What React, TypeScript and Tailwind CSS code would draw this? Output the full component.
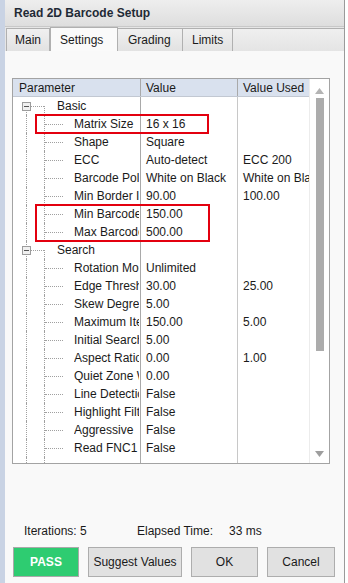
import React from "react";

type Row = { cat?: boolean; name: string; value?: string; used?: string };

const rows: Row[] = [
  { cat: true, name: "Basic" },
  { name: "Matrix Size", value: "16 x 16" },
  { name: "Shape", value: "Square" },
  { name: "ECC", value: "Auto-detect", used: "ECC 200" },
  { name: "Barcode Polarity", value: "White on Black", used: "White on Black" },
  { name: "Min Border Integrity", value: "90.00", used: "100.00" },
  { name: "Min Barcode Size", value: "150.00" },
  { name: "Max Barcode Size", value: "500.00" },
  { cat: true, name: "Search" },
  { name: "Rotation Mode", value: "Unlimited" },
  { name: "Edge Threshold", value: "30.00", used: "25.00" },
  { name: "Skew Degree", value: "5.00" },
  { name: "Maximum Iterations", value: "150.00", used: "5.00" },
  { name: "Initial Search", value: "5.00" },
  { name: "Aspect Ratio", value: "0.00", used: "1.00" },
  { name: "Quiet Zone Width", value: "0.00" },
  { name: "Line Detection", value: "False" },
  { name: "Highlight Filter", value: "False" },
  { name: "Aggressive", value: "False" },
  { name: "Read FNC1", value: "False" },
];

function TreeCell({ row, first }: { row: Row; first: boolean }) {
  return (
    <div className="relative w-[128px] h-[18px] border-r border-[#a9a9a9] overflow-hidden">
      {row.cat ? (
        <>
          <div
            className={
              first
                ? "absolute left-[13px] top-[13px] bottom-0 border-l border-dotted border-[#a0a0a0]"
                : "absolute left-[13px] top-0 bottom-0 border-l border-dotted border-[#a0a0a0]"
            }
          />
          <div className="absolute left-[18px] top-[9px] w-[13px] border-t border-dotted border-[#a0a0a0]" />
          <div className="absolute left-[31px] top-[9px] bottom-0 border-l border-dotted border-[#a0a0a0]" />
          <div className="absolute left-[9px] top-[5px] w-[9px] h-[9px] border border-[#9c9c9c] bg-[#f0f0f0] flex items-center justify-center">
            <div className="w-[5px] h-px bg-[#555]" />
          </div>
          <div className="absolute left-[44px] right-[1px] top-0 h-[18px] leading-[18px] whitespace-nowrap overflow-hidden">
            {row.name}
          </div>
        </>
      ) : (
        <>
          <div className="absolute left-[13px] top-0 bottom-0 border-l border-dotted border-[#a0a0a0]" />
          <div className="absolute left-[31px] top-0 bottom-0 border-l border-dotted border-[#a0a0a0]" />
          <div className="absolute left-[32px] top-[9px] w-[18px] border-t border-dotted border-[#a0a0a0]" />
          <div className="absolute left-[61px] right-[1px] top-0 h-[18px] leading-[18px] whitespace-nowrap overflow-hidden">
            {row.name}
          </div>
        </>
      )}
    </div>
  );
}

export default function App() {
  return (
    <div
      className="w-[348px] h-[583px] flex bg-white text-[12px] text-[#1a1a1a] overflow-hidden"
      style={{ fontFamily: '"Liberation Sans", Arial, sans-serif' }}
    >
      <div className="w-[5px] bg-[#c9d3e4]" />
      <div className="w-[340px] flex flex-col border-r border-[#9a9a9a]">
        <div className="h-[27px] flex items-center pl-[9px] bg-gradient-to-b from-[#eeeeee] to-[#dedede] border-b border-[#c8c8c8]">
          <span className="font-bold text-[#1f2a36]">Read 2D Barcode Setup</span>
        </div>
        <div className="h-[24px] flex items-end bg-[#e6e6e6]">
          <div className="w-[1px] h-full" />
          <div className="w-[44px] h-[23px] flex items-center pl-[8px] bg-gradient-to-b from-[#f0f0f0] to-[#e2e2e2] border border-[#b0b0b0] border-b-0">
            Main
          </div>
          <div className="w-[68px] h-[24px] flex items-start pt-[3px] pl-[9px] bg-[#fafafa] border border-[#b0b0b0] border-b-0">
            Settings
          </div>
          <div className="w-[65px] h-[23px] flex items-center pl-[10px] bg-gradient-to-b from-[#f0f0f0] to-[#e2e2e2] border border-[#b0b0b0] border-b-0 border-l-0">
            Grading
          </div>
          <div className="w-[50px] h-[23px] flex items-center pl-[9px] bg-gradient-to-b from-[#f0f0f0] to-[#e2e2e2] border border-[#b0b0b0] border-b-0 border-l-0">
            Limits
          </div>
          <div className="flex-1 h-[23px] bg-gradient-to-b from-[#efefef] to-[#e4e4e4] border-t border-l-0 border-[#b0b0b0]" />
        </div>
        <div className="flex-1 flex flex-col bg-[#f9f9f9] pl-[7px] pt-[27px] pb-[6px]">
          <div className="w-[318px] h-[386px] border border-[#a3a3a3] bg-white flex">
            <div className="w-[296px] flex flex-col">
              <div className="h-[18px] flex bg-[#d9e1ee] border-b border-[#c2c8d2]">
                <div className="w-[128px] border-r border-[#a9a9a9] pl-[6px] leading-[18px]">Parameter</div>
                <div className="w-[97px] border-r border-[#a9a9a9] pl-[5px] leading-[18px]">Value</div>
                <div className="flex-1 pl-[5px] leading-[18px] whitespace-nowrap overflow-hidden">Value Used</div>
              </div>
              <div className="relative flex-1 flex flex-col">
                {rows.map((r, i) => (
                  <div key={i} className="flex h-[18px]">
                    <TreeCell row={r} first={i === 0} />
                    <div className="w-[97px] border-r border-[#c8c8c8] pl-[5px] leading-[18px] whitespace-nowrap overflow-hidden">
                      {r.value ?? ""}
                    </div>
                    <div className="flex-1 pl-[5px] leading-[18px] whitespace-nowrap overflow-hidden">{r.used ?? ""}</div>
                  </div>
                ))}
                <div className="flex flex-1">
                  <div className="relative w-[128px] border-r border-[#a9a9a9]">
                    <div className="absolute left-[13px] top-0 bottom-0 border-l border-dotted border-[#a0a0a0]" />
                    <div className="absolute left-[31px] top-0 bottom-0 border-l border-dotted border-[#a0a0a0]" />
                  </div>
                  <div className="w-[97px] border-r border-[#c8c8c8]" />
                </div>
                <div className="absolute left-[22px] top-[17px] w-[174px] h-[20px] border-2 border-[#e3000f]" />
                <div className="absolute left-[22px] top-[107px] w-[175px] h-[38px] border-2 border-[#e3000f]" />
              </div>
            </div>
            <div className="flex-1 flex flex-col items-center border-l border-[#ececec] pt-[9px] pb-[6px]">
              <svg width="9" height="6" viewBox="0 0 9 6">
                <path d="M0 6 L4.5 0 L9 6 Z" fill="#b4b4b4" />
              </svg>
              <div className="mt-[4px] w-[8px] h-[253px] bg-[#acacac]" />
              <div className="flex-1" />
              <svg width="9" height="6" viewBox="0 0 9 6">
                <path d="M0 0 L9 0 L4.5 6 Z" fill="#9e9e9e" />
              </svg>
            </div>
          </div>
          <div className="flex-1" />
          <div className="h-[16px] flex items-center text-[12px]">
            <span className="ml-[12px] w-[113px]">Iterations: 5</span>
            <span className="w-[92px]">Elapsed Time:</span>
            <span>33 ms</span>
          </div>
          <div className="mt-[8px] flex gap-[9px] ml-[1px]">
            <div className="w-[66px] h-[30px] bg-[#2ecc71] border border-[#a9a9a9] flex items-center justify-center font-bold text-white">
              PASS
            </div>
            <div className="w-[94px] h-[30px] bg-[#e1e1e1] border border-[#adadad] flex items-center justify-center">
              Suggest Values
            </div>
            <div className="w-[67px] h-[30px] bg-[#e1e1e1] border border-[#adadad] flex items-center justify-center">
              OK
            </div>
            <div className="w-[68px] h-[30px] bg-[#e1e1e1] border border-[#adadad] flex items-center justify-center">
              Cancel
            </div>
          </div>
        </div>
      </div>
      <div className="flex-1 bg-white" />
    </div>
  );
}
